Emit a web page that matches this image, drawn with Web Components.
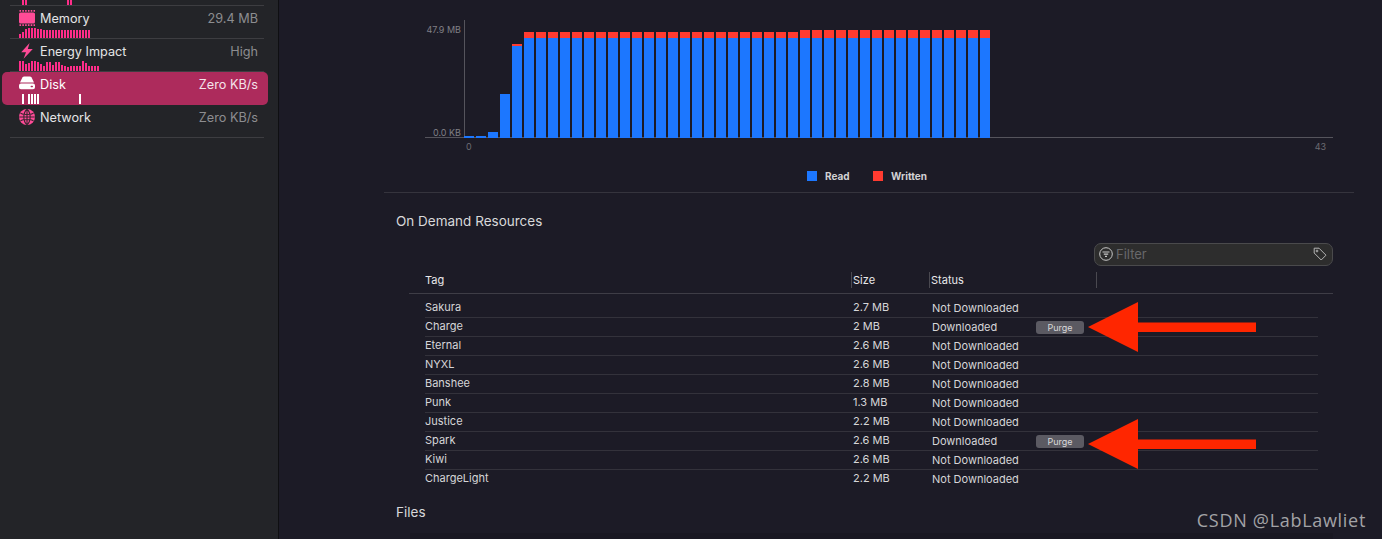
<!DOCTYPE html>
<html>
<head>
<meta charset="utf-8">
<title>Disk</title>
<style>
  html, body { margin: 0; height: 539px; overflow: hidden; background: #1c1b26; }
  body { font-family: Inter, "Liberation Sans", sans-serif; }
  .app { display: flex; height: 539px; }
  .main { position: relative; flex: 1; min-width: 0; padding: 0 28px 0 105px; }
</style>
</head>
<body>
<div class="app">
  <app-sidebar>
    <spark-bars slot="top" on="1,2,16,17" color="#ff2d8a" cut></spark-bars>
    <side-row name="Memory" value="29.4 MB">
      <svg slot="icon" width="16" height="16" viewBox="0 0 16 16"><rect x="0" y="2.4" width="16" height="11.2" rx="1.6" fill="#ff4b97"/><path d="M.5 .9H16M.5 15.1H16" stroke="#ff4b97" stroke-width="1.6" stroke-dasharray="1.6 1.2" fill="none"/></svg>
      <spark-bars slot="graph" heights="4,6,9,10,10,10,9,9,8,8,8,8,8,8,8,8,8,8,8,8,8,8,8,8" color="#ff2d8a"></spark-bars>
    </side-row>
    <side-row name="Energy Impact" value="High">
      <svg slot="icon" width="16" height="16" viewBox="0 0 16 16"><path d="M10.6 0 2.2 9.2H7L4.6 15.8 13.8 5.9H8.8Z" fill="#ff4b97"/></svg>
      <spark-bars slot="graph" heights="10,10,7,8,10,10,9,7,5,9,9,6,9,9,6,5,4,5,5,5,5,10,8,5,5,5,5" color="#ff2d8a"></spark-bars>
    </side-row>
    <side-row name="Disk" value="Zero KB/s" selected>
      <svg slot="icon" width="16" height="16" viewBox="0 0 16 16"><path d="M3.4 1.4C3.8.7 4.5.4 5.3.4h5.4c.8 0 1.5.3 1.9 1L15 6.4H1Z" fill="#fff"/><path d="M2 7.6h12a2 2 0 0 1 2 2v1.6a2 2 0 0 1-2 2H2a2 2 0 0 1-2-2V9.600a2 2 0 0 1 2-2Z" fill="#fff"/><rect x="11.600" y="9.700" width="2.400" height="1.500" rx=".7" fill="#ad2b5c"/></svg>
      <spark-bars slot="graph" on="1,3,4,5,6,20" color="#fff"></spark-bars>
    </side-row>
    <side-row name="Network" value="Zero KB/s" last>
      <svg slot="icon" width="16" height="16" viewBox="0 0 16 16"><circle cx="8" cy="8" r="8" fill="#ff4b97"/><path d="M8 0V16M1.500 4.200C4 6 12 6 14.500 4.200M1.500 11.800C4 10 12 10 14.500 11.800M.2 8H15.800M8 .2C3.800 4 3.800 12 8 15.800M8 .2C12.200 4 12.200 12 8 15.800" stroke="#3a2530" stroke-width="1.100" fill="none"/></svg>
    </side-row>
  </app-sidebar>

  <div class="main">
    <disk-chart></disk-chart>
    <section-title style="margin-top:19px">On Demand Resources</section-title>
    <filter-field></filter-field>
    <resource-table>
      <resource-row tag="Sakura" size="2.7 MB" status="Not Downloaded"></resource-row>
      <resource-row tag="Charge" size="2 MB" status="Downloaded" purge></resource-row>
      <resource-row tag="Eternal" size="2.6 MB" status="Not Downloaded"></resource-row>
      <resource-row tag="NYXL" size="2.6 MB" status="Not Downloaded"></resource-row>
      <resource-row tag="Banshee" size="2.8 MB" status="Not Downloaded"></resource-row>
      <resource-row tag="Punk" size="1.3 MB" status="Not Downloaded"></resource-row>
      <resource-row tag="Justice" size="2.2 MB" status="Not Downloaded"></resource-row>
      <resource-row tag="Spark" size="2.6 MB" status="Downloaded" purge></resource-row>
      <resource-row tag="Kiwi" size="2.6 MB" status="Not Downloaded"></resource-row>
      <resource-row tag="ChargeLight" size="2.2 MB" status="Not Downloaded" last></resource-row>
    </resource-table>
    <section-title style="margin-top:14px">Files</section-title>
    <files-strip></files-strip>

    <red-arrow style="left:809px;top:302px"></red-arrow>
    <red-arrow style="left:809px;top:419px"></red-arrow>
    <water-mark>CSDN @LabLawliet</water-mark>
  </div>
</div>

<script>
class BaseElement extends HTMLElement {
  constructor() {
    super();
    this.attachShadow({ mode: "open" });
  }
  connectedCallback() {
    const template = document.createElement("template");
    template.innerHTML = `<style>${this.getStyles()}</style>${this.getMarkup()}`;
    this.shadowRoot.appendChild(template.content.cloneNode(true));
  }
  getStyles() { return ""; }
  getMarkup() { return "<slot></slot>"; }
}

class AppSidebar extends BaseElement {
  getStyles() {
    return `
      :host { display: block; box-sizing: border-box; width: 279px; height: 539px; flex: none;
        background: #232428; border-right: 1px solid #0f0f12; padding: 0 14px 0 10px; }
      .top { height: 5px; overflow: hidden; border-bottom: 1px solid #3d3d41; padding-left: 9px; }
    `;
  }
  getMarkup() {
    return `<div class="top"><slot name="top"></slot></div><slot></slot>`;
  }
}

class SideRow extends BaseElement {
  getStyles() {
    return `
      :host { display: block; box-sizing: border-box; height: 33px; padding: 2px 6px 0 9px;
        border-bottom: 1px solid #3d3d41; color: #e4e4e6; font-size: 12.7px; }
      :host([selected]) { margin: 0 -4px 0 -8px; padding: 2px 10px 0 17px; height: 33px;
        background: #ad2b5c; border-bottom: 0; border-radius: 5px; color: #fff; }
      .line { display: flex; align-items: center; height: 20px; }
      .icon { width: 16px; height: 16px; margin-right: 5px; flex: none; display: flex; }
      .name { flex: 1; }
      .value { color: #8d8d90; }
      :host([selected]) .value { color: #f4e3ea; }
    `;
  }
  getMarkup() {
    return `
      <div class="line">
        <span class="icon"><slot name="icon"></slot></span>
        <span class="name">${this.getAttribute("name")}</span>
        <span class="value">${this.getAttribute("value")}</span>
      </div>
      <slot name="graph"></slot>
    `;
  }
}

class SparkBars extends BaseElement {
  getStyles() {
    return `
      :host { display: flex; align-items: flex-end; gap: 1px; height: 10px; }
      :host([cut]) { height: 5px; }
      i { display: block; width: 2px; flex: none; }
    `;
  }
  getMarkup() {
    const color = this.getAttribute("color");
    const full = this.hasAttribute("cut") ? 5 : 10;
    let heights;
    if (this.hasAttribute("on")) {
      const on = this.getAttribute("on").split(",").map(Number);
      heights = [];
      for (let i = 0; i <= Math.max(...on); i++) heights.push(on.includes(i) ? full : 0);
    } else {
      heights = this.getAttribute("heights").split(",");
    }
    return heights.map((h) => `<i style="height:${h}px;background:${color}"></i>`).join("");
  }
}

class DiskChart extends BaseElement {
  getStyles() {
    return `
      :host { display: block; box-sizing: border-box; height: 193px; padding: 20px 21px 0 41px;
        border-bottom: 1px solid #35343d; color: #807f85; font-size: 9px; line-height: 11px; }
      .plot { display: grid; grid-template-columns: 39px 1fr; height: 118px; }
      .ylabels { display: flex; flex-direction: column; justify-content: space-between; align-items: flex-end;
        box-sizing: border-box; padding: 4px 3px 0 0; border-bottom: 1px solid #55545c; }
      .ylabels span:last-child { margin-bottom: -1px; }
      .bars { display: flex; align-items: flex-end; gap: 2px; border-left: 1px solid #55545c; margin-left: 0;
        border-bottom: 1px solid #55545c; }
      .bars > div { width: 10px; flex: none; display: flex; flex-direction: column; margin-bottom: -1px; }
      .bars > div:first-child { margin-left: -1px; }
      .r { background: #ff3b30; }
      .b { background: #1c77ff; flex: 1; }
      .xlabels { display: flex; justify-content: space-between; padding: 3px 7px 0 41px; color: #6c6b72; }
      .legend { display: flex; align-items: center; height: 12px; margin-top: 18px; padding-left: 382px;
        color: #d2d2d4; font-size: 10px; font-weight: 700; }
      .swatch { width: 10px; height: 10px; margin-right: 8px; }
      .legend span:nth-child(2) { width: 48px; }
    `;
  }
  getMarkup() {
    const bars = [];
    for (let i = 0; i < 44; i++) {
      let total = 106, red = 6;
      if (i === 0 || i === 1) { total = 2; red = 0; }
      if (i === 2) { total = 6; red = 0; }
      if (i === 3) { total = 44; red = 0; }
      if (i === 4) { total = 94; red = 2; }
      if (i >= 28) { total = 108; red = 8; }
      bars.push(`<div style="height:${total}px">${red ? `<i class="r" style="height:${red}px"></i>` : ""}<i class="b"></i></div>`);
    }
    return `
      <div class="plot">
        <div class="ylabels"><span>47.9 MB</span><span>0.0 KB</span></div>
        <div class="bars">${bars.join("")}</div>
      </div>
      <div class="xlabels"><span>0</span><span>43</span></div>
      <div class="legend">
        <i class="swatch" style="background:#1c77ff"></i><span>Read</span>
        <i class="swatch" style="background:#ff3b30"></i><span>Written</span>
      </div>
    `;
  }
}

class SectionTitle extends BaseElement {
  getStyles() {
    return `:host { display: block; padding-left: 12px; height: 18px; line-height: 18px; font-size: 13.5px; color: #d8d8da; }`;
  }
}

class FilterField extends BaseElement {
  getStyles() {
    return `
      :host { display: flex; justify-content: flex-end; margin-top: 13px; padding-right: 21px; }
      .box { box-sizing: border-box; width: 239px; height: 23px; display: flex; align-items: center; gap: 3px;
        padding: 0 5px 1px 4px; background: #2d2d2d; border: 1px solid #4a4a4c; border-radius: 7px;
        color: #68686a; font-size: 13px; }
      span { flex: 1; }
      svg { flex: none; }
    `;
  }
  getMarkup() {
    return `
      <div class="box">
        <svg width="14" height="14" viewBox="0 0 14 14" fill="none" stroke="#c8c8c8"><circle cx="7" cy="7" r="6.300"/><path d="M3.500 5H10.500M4.800 7.200H9.200M6 9.400H8" stroke-width="1.200"/></svg>
        <span>Filter</span>
        <svg width="14" height="14" viewBox="0 0 14 14" fill="none" stroke="#b4b4b4"><path d="M1.200 1.200H6L13 8.200 8.200 13 1.200 6Z" stroke-linejoin="round"/><circle cx="4" cy="4" r=".9"/></svg>
      </div>
    `;
  }
}

class ResourceTable extends BaseElement {
  getStyles() {
    return `
      :host { display: block; margin: 0 21px 0 25px; color: #d6d6d8; font-size: 11px; }
      .head { display: grid; grid-template-columns: 442px 78px 167px 1fr; height: 28px; box-sizing: border-box;
        align-items: center; border-bottom: 1px solid #3e3d46; color: #e8e8ea; font-weight: 400; }
      .head span { box-sizing: border-box; height: 16px; line-height: 16px; padding-left: 1px; border-left: 1px solid #4a4950; }
      .head span:first-child { padding-left: 16px; border-left: 0; }
      .list { padding: 5px 15px 0 16px; }
    `;
  }
  getMarkup() {
    return `
      <div class="head"><span>Tag</span><span>Size</span><span>Status</span><span></span></div>
      <div class="list"><slot></slot></div>
    `;
  }
}

class ResourceRow extends BaseElement {
  getStyles() {
    return `
      :host { display: grid; grid-template-columns: 428px 79px 104px 1fr; align-items: center; box-sizing: border-box;
        height: 19px; padding-bottom: 2px; border-bottom: 1px solid #33323b; }
      :host([last]) { border-bottom-color: transparent; }
      .status { padding-top: 2px; }
      button { display: block; box-sizing: border-box; width: 48px; height: 13px; margin-top: 2px; padding: 0; border: 0; border-radius: 3px;
        background: #5b5a62; color: #d8d8da; font: 9px/13px Inter, "Liberation Sans", sans-serif; }
    `;
  }
  getMarkup() {
    return `
      <span>${this.getAttribute("tag")}</span>
      <span>${this.getAttribute("size")}</span>
      <span class="status">${this.getAttribute("status")}</span>
      <span>${this.hasAttribute("purge") ? "<button>Purge</button>" : ""}</span>
    `;
  }
}

class FilesStrip extends BaseElement {
  getStyles() {
    return `:host { display: block; height: 6px; margin: 12px 21px 0 26px; background: #191822; }`;
  }
}

class RedArrow extends BaseElement {
  getStyles() {
    return `:host { position: absolute; display: block; width: 168px; height: 50px; }`;
  }
  getMarkup() {
    return `<svg width="168" height="50" viewBox="0 0 168 50"><path d="M0 25 50 0V20.500H168V30H50V50Z" fill="#ff2600"/></svg>`;
  }
}

class WaterMark extends BaseElement {
  getStyles() {
    return `:host { position: absolute; right: 16px; top: 508px; font: 18px/24px "Open Sans", sans-serif; color: #a3a3a6; letter-spacing: .7px; }`;
  }
}

customElements.define("app-sidebar", AppSidebar);
customElements.define("side-row", SideRow);
customElements.define("spark-bars", SparkBars);
customElements.define("disk-chart", DiskChart);
customElements.define("section-title", SectionTitle);
customElements.define("filter-field", FilterField);
customElements.define("resource-table", ResourceTable);
customElements.define("resource-row", ResourceRow);
customElements.define("files-strip", FilesStrip);
customElements.define("red-arrow", RedArrow);
customElements.define("water-mark", WaterMark);
</script>
</body>
</html>
